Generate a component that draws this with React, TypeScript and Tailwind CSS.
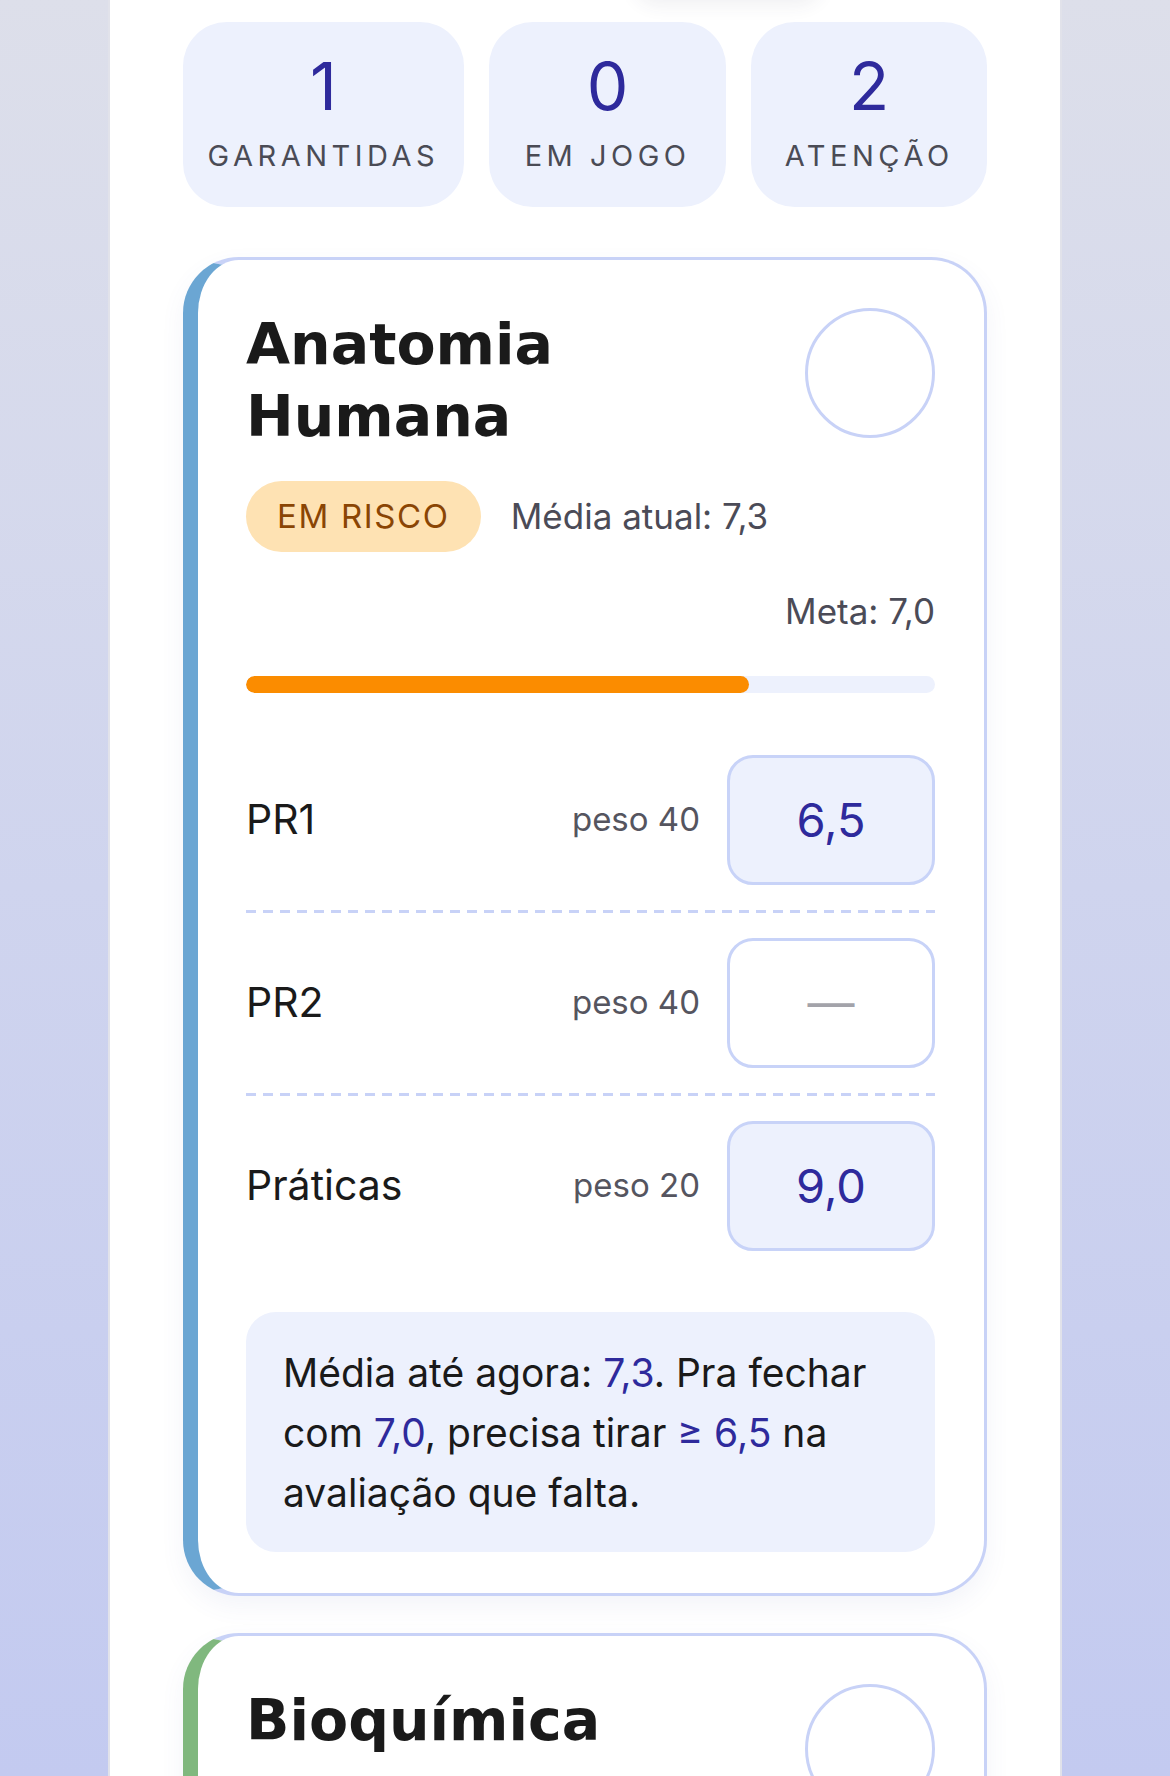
import React from 'react';

type Grade = { label: string; peso: number; value: string | null };

const stats = [
  { n: '1', label: 'GARANTIDAS' },
  { n: '0', label: 'EM JOGO' },
  { n: '2', label: 'ATENÇÃO' },
];

const anatomia: Grade[] = [
  { label: 'PR1', peso: 40, value: '6,5' },
  { label: 'PR2', peso: 40, value: null },
  { label: 'Práticas', peso: 20, value: '9,0' },
];

const bioquimica: Grade[] = [
  { label: 'PR1', peso: 50, value: '8,5' },
  { label: 'PR2', peso: 50, value: '8,0' },
];

function GradeRow({ g, last }: { g: Grade; last: boolean }) {
  return (
    <>
      <div className="flex items-center py-[25px]">
        <span className="flex-1 text-[41px] text-[#1a1a1a]">{g.label}</span>
        <span className="mr-[27px] text-[33px] text-[#55555f]">peso {g.peso}</span>
        {g.value ? (
          <div className="flex h-[130px] w-[208px] items-center justify-center rounded-[26px] border-[3px] border-[#c8d3f8] bg-[#edf1fd] text-[47px] text-[#2e2a9c]">
            {g.value}
          </div>
        ) : (
          <div className="flex h-[130px] w-[208px] items-center justify-center rounded-[26px] border-[3px] border-[#c8d3f8] bg-white text-[47px] text-[#a3a3aa]">
            —
          </div>
        )}
      </div>
      {!last && (
        <div className="h-[3px] bg-[repeating-linear-gradient(90deg,#c8d2f7_0_10px,transparent_10px_17px)]" />
      )}
    </>
  );
}

function SubjectCard({
  title,
  accent,
  grades,
  children,
  footer,
}: {
  title: string;
  accent: string;
  grades: Grade[];
  children?: React.ReactNode;
  footer?: React.ReactNode;
}) {
  return (
    <div
      className={`rounded-[56px] border-[3px] border-l-[15px] border-[#c8d2f7] bg-white pt-[48px] pb-[41px] pl-[48px] pr-[49px] shadow-[0_10px_24px_rgba(90,100,170,0.07)] ${accent}`}
    >
      <div className="flex items-start justify-between gap-6">
        <h2 className="font-['DejaVu_Sans',sans-serif] text-[57px] leading-[72px] font-bold text-[#1a1a1a]">
          {title}
        </h2>
        <div className="h-[130px] w-[130px] shrink-0 rounded-full border-[3px] border-[#c8d2f7] bg-white" />
      </div>
      {children}
      <div className="mt-[37px]">
        {grades.map((g, i) => (
          <GradeRow key={g.label} g={g} last={i === grades.length - 1} />
        ))}
      </div>
      {footer}
    </div>
  );
}

export default function App() {
  return (
    <div className="h-[1776px] overflow-hidden bg-linear-to-b from-[#dddfea] via-[#cfd4ee] to-[#c3caf0] font-['Inter',sans-serif]">
      <div className="mx-auto min-h-full w-[954px] border-x-2 border-[#e1e2ea] bg-white px-[73px] pt-[22px]">
        {/* sombra do elemento acima, fora da tela */}
        <div className="h-0">
          <div className="ml-[450px] h-[50px] w-[190px] -translate-y-[72px] rounded-[30px] bg-white shadow-[0_6px_18px_rgba(60,60,90,0.07)]" />
        </div>

        {/* resumo */}
        <div className="grid grid-cols-[280fr_237fr_235fr] gap-[25px]">
          {stats.map((s) => (
            <div
              key={s.label}
              className="flex h-[185px] flex-col items-center rounded-[44px] bg-[#edf1fd] pt-[31px]"
            >
              <span className="text-[66px] leading-none text-[#2e2a9c]">{s.n}</span>
              <span className="mt-[19px] text-[29px] leading-[35px] tracking-[0.155em] text-[#4a4b55]">
                {s.label}
              </span>
            </div>
          ))}
        </div>

        <div className="mt-[50px] flex flex-col gap-[37px]">
          <SubjectCard
            title="Anatomia Humana"
            accent="border-l-[#6ba6d3]"
            grades={anatomia}
            footer={
              <div className="mt-[36px] rounded-[30px] bg-[#edf1fd] pl-[37px] pr-[30px] pt-[31px] pb-[29px] text-[39px] leading-[60px] text-[#1a1a1a]">
                Média até agora: <span className="text-[#2e2a9c]">7,3</span>. Pra fechar com{' '}
                <span className="text-[#2e2a9c]">7,0</span>, precisa tirar{' '}
                <span className="text-[#2e2a9c]">≥ 6,5</span> na avaliação que falta.
              </div>
            }
          >
            <div className="mt-[29px] flex items-center gap-[30px]">
              <span className="flex h-[71px] items-center rounded-full bg-[#fee2b3] px-[31px] text-[33px] tracking-[0.05em] text-[#8a4504]">
                EM RISCO
              </span>
              <span className="text-[35px] text-[#4b4b57]">Média atual: 7,3</span>
            </div>
            <div className="mt-[38px] text-right text-[35px] leading-[42px] text-[#4b4b57]">Meta: 7,0</div>
            <div className="mt-[44px] h-[17px] overflow-hidden rounded-full bg-[#edf1fd]">
              <div className="h-full rounded-full bg-[#fb8c00]" style={{ width: '73%' }} />
            </div>
          </SubjectCard>

          <SubjectCard title="Bioquímica" accent="border-l-[#80b87e]" grades={bioquimica}>
            <div className="mt-[29px] flex items-center gap-[30px]">
              <span className="flex h-[71px] items-center rounded-full bg-[#d7f0d5] px-[31px] text-[33px] tracking-[0.05em] text-[#2f6b2d]">
                GARANTIDA
              </span>
              <span className="text-[35px] text-[#4b4b57]">Média atual: 8,3</span>
            </div>
          </SubjectCard>
        </div>
      </div>
    </div>
  );
}
